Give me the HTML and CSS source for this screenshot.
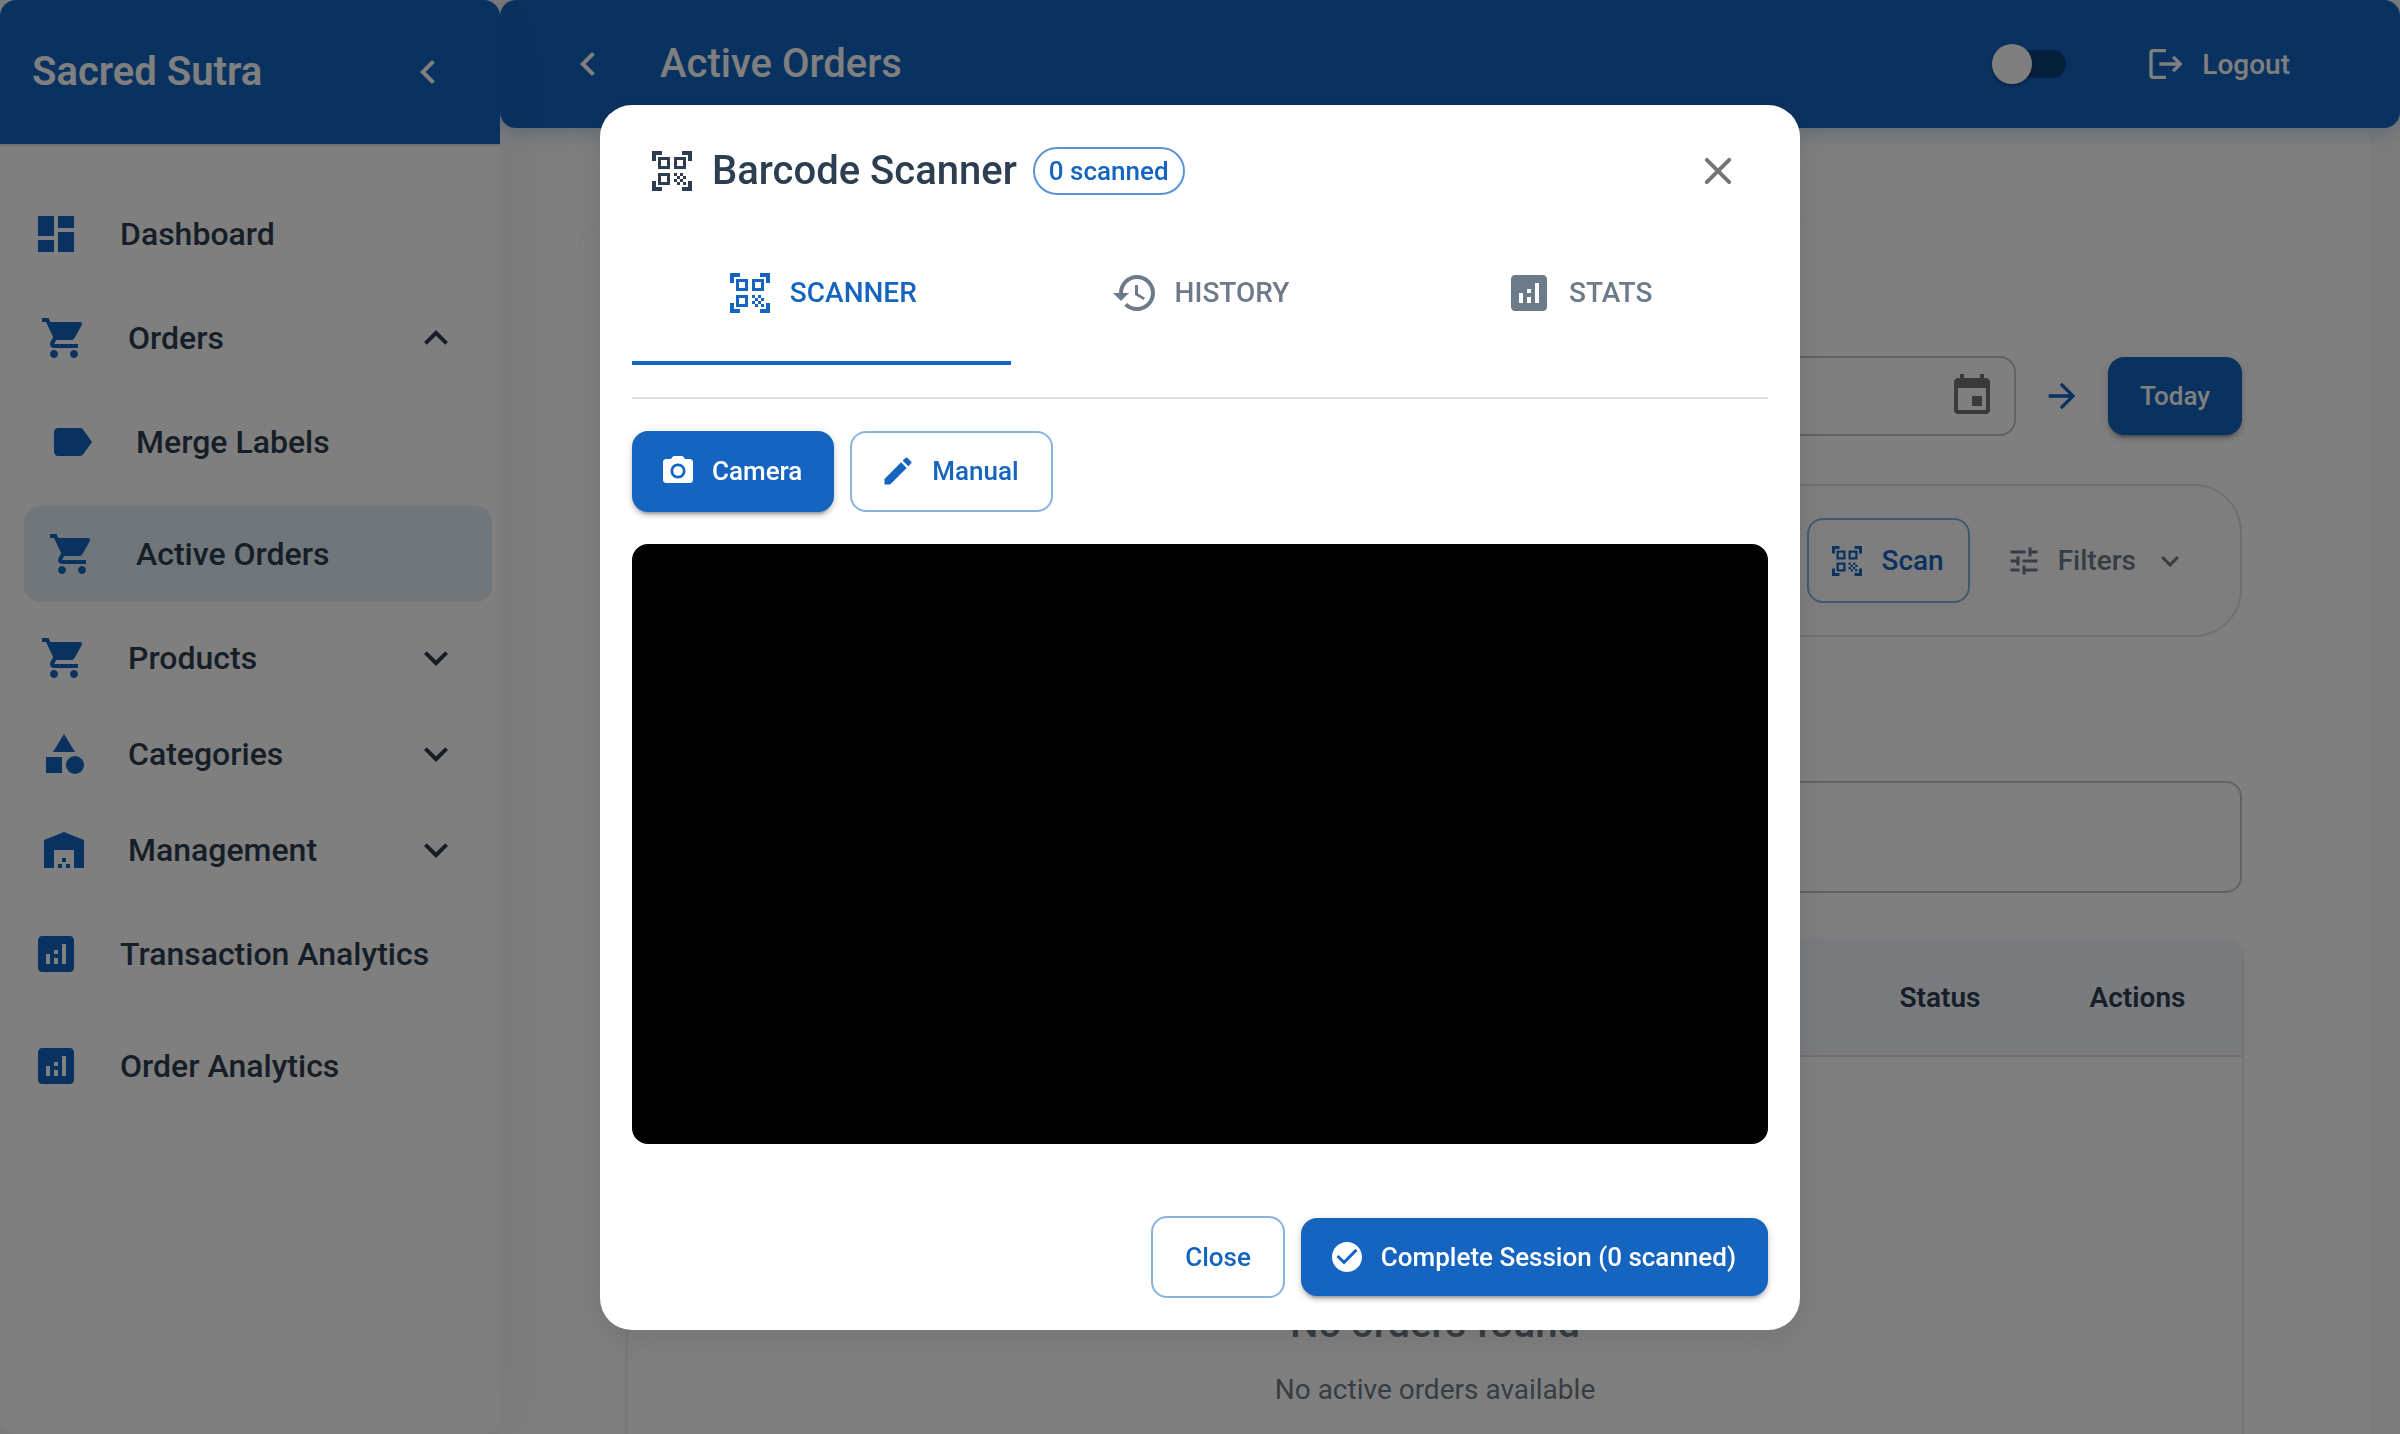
FILE: index.html
```html
<!DOCTYPE html>
<html lang="en">
<head>
<meta charset="utf-8">
<meta name="viewport" content="width=device-width, initial-scale=1">
<title>Sacred Sutra – Active Orders</title>
<link rel="stylesheet" href="styles.css">
</head>
<body>
<svg class="sprite" aria-hidden="true">
  <symbol id="i-dashboard" viewBox="0 0 24 24"><path d="M3 13h8V3H3v10zm0 8h8v-6H3v6zm10 0h8V11h-8v10zm0-18v6h8V3h-8z"/></symbol>
  <symbol id="i-cart" viewBox="0 0 24 24"><path d="M7 18c-1.100 0-1.990.9-1.990 2S5.900 22 7 22s2-.9 2-2-.9-2-2-2zM1 2v2h2l3.600 7.590-1.350 2.450c-.16.28-.25.61-.25.96 0 1.100.9 2 2 2h12v-2H7.420c-.14 0-.25-.11-.25-.25l.03-.12.9-1.630h7.450c.75 0 1.410-.41 1.750-1.030l3.580-6.490c.08-.14.12-.31.12-.48 0-.55-.45-1-1-1H5.210l-.94-2H1zm16 16c-1.100 0-1.990.9-1.990 2s.89 2 1.990 2 2-.9 2-2-.9-2-2-2z"/></symbol>
  <symbol id="i-label" viewBox="0 0 24 24"><path d="M17.630 5.840C17.270 5.330 16.670 5 16 5L5 5.010C3.900 5.010 3 5.900 3 7v10c0 1.100.9 1.990 2 1.990L16 19c.67 0 1.270-.33 1.630-.84L22 12l-4.370-6.160z"/></symbol>
  <symbol id="i-category" viewBox="0 0 24 24"><path d="m12 2-5.500 9h11z"/><circle cx="17.500" cy="17.500" r="4.500"/><path d="M3 13.500h8v8H3z"/></symbol>
  <symbol id="i-warehouse" viewBox="0 0 24 24"><path d="M22 21V7L12 3 2 7v14h5v-9h10v9h5zm-11-2H9v2h2v-2zm2-3h-2v2h2v-2zm2 3h-2v2h2v-2z"/></symbol>
  <symbol id="i-analytics" viewBox="0 0 24 24"><path d="M19 3H5c-1.100 0-2 .9-2 2v14c0 1.100.9 2 2 2h14c1.100 0 2-.9 2-2V5c0-1.100-.9-2-2-2zM9 17H7v-5h2v5zm4 0h-2v-3h2v3zm0-5h-2v-2h2v2zm4 5h-2V7h2v10z"/></symbol>
  <symbol id="i-left" viewBox="0 0 24 24"><path d="M15.410 7.410 14 6l-6 6 6 6 1.410-1.410L10.830 12z"/></symbol>
  <symbol id="i-down" viewBox="0 0 24 24"><path d="M16.590 8.590 12 13.170 7.410 8.590 6 10l6 6 6-6z"/></symbol>
  <symbol id="i-up" viewBox="0 0 24 24"><path d="m12 8-6 6 1.410 1.410L12 10.830l4.590 4.580L18 14z"/></symbol>
  <symbol id="i-logout" viewBox="0 0 24 24"><path d="m17 7-1.410 1.410L18.170 11H8v2h10.170l-2.580 2.580L17 17l5-5zM4 5h8V3H4c-1.100 0-2 .9-2 2v14c0 1.100.9 2 2 2h8v-2H4V5z"/></symbol>
  <symbol id="i-event" viewBox="0 0 24 24"><path d="M17 12h-5v5h5v-5zM16 1v2H8V1H6v2H5c-1.110 0-1.990.9-1.990 2L3 19c0 1.100.89 2 2 2h14c1.100 0 2-.9 2-2V5c0-1.100-.9-2-2-2h-1V1h-2zm3 18H5V8h14v11z"/></symbol>
  <symbol id="i-forward" viewBox="0 0 24 24"><path d="m12 4-1.410 1.410L16.170 11H4v2h12.170l-5.580 5.590L12 20l8-8z"/></symbol>
  <symbol id="i-qr" viewBox="0 0 24 24"><path d="M9.500 6.500v3h-3v-3h3M11 5H5v6h6V5zm-1.500 9.500v3h-3v-3h3M11 13H5v6h6v-6zm6.500-6.500v3h-3v-3h3M19 5h-6v6h6V5zm-6 8h1.500v1.500H13V13zm1.500 1.500H16V16h-1.500v-1.500zM16 13h1.500v1.500H16V13zm-3 3h1.500v1.500H13V16zm1.500 1.500H16V19h-1.500v-1.500zM16 16h1.500v1.500H16V16zm1.500-1.500H19V16h-1.500v-1.500zm0 3H19V19h-1.500v-1.500zM22 7h-2V4h-3V2h5v5zm0 15v-5h-2v3h-3v2h5zM2 22h5v-2H4v-3H2v5zM2 2v5h2V4h3V2H2z"/></symbol>
  <symbol id="i-tune" viewBox="0 0 24 24"><path d="M3 17v2h6v-2H3zM3 5v2h10V5H3zm10 16v-2h8v-2h-8v-2h-2v6h2zM7 9v2H3v2h4v2h2V9H7zm14 4v-2H11v2h10zm-6-4h2V7h4V5h-4V3h-2v6z"/></symbol>
  <symbol id="i-close" viewBox="0 0 24 24"><path d="M18.300 5.710a.996.996 0 0 0-1.410 0L12 10.590 7.110 5.700a.996.996 0 1 0-1.410 1.410L10.590 12 5.700 16.890a.996.996 0 1 0 1.410 1.410L12 13.410l4.890 4.890a.996.996 0 1 0 1.410-1.410L13.410 12l4.890-4.890c.38-.38.38-1.020 0-1.400z"/></symbol>
  <symbol id="i-history" viewBox="0 0 24 24"><path d="M13 3c-4.970 0-9 4.030-9 9H1l3.890 3.890.07.14L9 12H6c0-3.870 3.130-7 7-7s7 3.130 7 7-3.130 7-7 7c-1.930 0-3.680-.79-4.940-2.060l-1.420 1.420C8.270 19.990 10.510 21 13 21c4.970 0 9-4.030 9-9s-4.030-9-9-9zm-1 5v5l4.280 2.540.72-1.210-3.500-2.080V8H12z"/></symbol>
  <symbol id="i-camera" viewBox="0 0 24 24"><circle cx="12" cy="12" r="3.200"/><path d="M9 2 7.170 4H4c-1.100 0-2 .9-2 2v12c0 1.100.9 2 2 2h16c1.100 0 2-.9 2-2V6c0-1.100-.9-2-2-2h-3.170L15 2H9zm3 15c-2.760 0-5-2.240-5-5s2.240-5 5-5 5 2.240 5 5-2.240 5-5 5z"/></symbol>
  <symbol id="i-edit" viewBox="0 0 24 24"><path d="M3 17.250V21h3.750L17.810 9.940l-3.750-3.750L3 17.250zM20.710 7.040c.39-.39.39-1.020 0-1.410l-2.340-2.340a.996.996 0 0 0-1.410 0l-1.830 1.830 3.750 3.750 1.830-1.830z"/></symbol>
  <symbol id="i-check" viewBox="0 0 24 24"><path d="M12 2C6.480 2 2 6.480 2 12s4.480 10 10 10 10-4.480 10-10S17.520 2 12 2zm-2 15-5-5 1.410-1.410L10 14.170l7.590-7.590L19 8l-9 9z"/></symbol>
</svg>

<div class="app">
  <aside class="sidebar">
    <div class="brand">
      <span class="brand-name">Sacred Sutra</span>
      <button class="icon-button" type="button" aria-label="Collapse sidebar"><svg class="icon"><use href="#i-left"/></svg></button>
    </div>
    <nav class="nav">
      <a class="nav-item nav-page" href="#"><svg class="icon"><use href="#i-dashboard"/></svg>Dashboard</a>
      <button class="nav-item nav-group" type="button" aria-expanded="true"><svg class="icon"><use href="#i-cart"/></svg>Orders<svg class="icon nav-arrow"><use href="#i-up"/></svg></button>
      <a class="nav-item nav-sub" href="#"><svg class="icon"><use href="#i-label"/></svg>Merge Labels</a>
      <a class="nav-item nav-sub is-active" href="#" aria-current="page"><svg class="icon"><use href="#i-cart"/></svg>Active Orders</a>
      <button class="nav-item nav-group" type="button" aria-expanded="false"><svg class="icon"><use href="#i-cart"/></svg>Products<svg class="icon nav-arrow"><use href="#i-down"/></svg></button>
      <button class="nav-item nav-group" type="button" aria-expanded="false"><svg class="icon"><use href="#i-category"/></svg>Categories<svg class="icon nav-arrow"><use href="#i-down"/></svg></button>
      <button class="nav-item nav-group" type="button" aria-expanded="false"><svg class="icon"><use href="#i-warehouse"/></svg>Management<svg class="icon nav-arrow"><use href="#i-down"/></svg></button>
      <a class="nav-item nav-page" href="#"><svg class="icon"><use href="#i-analytics"/></svg>Transaction Analytics</a>
      <a class="nav-item nav-page" href="#"><svg class="icon"><use href="#i-analytics"/></svg>Order Analytics</a>
    </nav>
  </aside>

  <div class="page">
    <header class="topbar">
      <button class="icon-button" type="button" aria-label="Back"><svg class="icon"><use href="#i-left"/></svg></button>
      <h1 class="page-title">Active Orders</h1>
      <input class="switch" type="checkbox" aria-label="Dark mode">
      <button class="logout" type="button"><svg class="icon icon-md"><use href="#i-logout"/></svg>Logout</button>
    </header>
    <main class="content">
      <section class="card">
        <div class="date-row">
          <div class="date-field">
            <input class="date-input" type="text" aria-label="Date">
            <button class="icon-button" type="button" aria-label="Choose date"><svg class="icon"><use href="#i-event"/></svg></button>
          </div>
          <button class="icon-button next-day" type="button" aria-label="Next day"><svg class="icon icon-md"><use href="#i-forward"/></svg></button>
          <button class="btn btn-contained" type="button">Today</button>
        </div>
        <div class="toolbar">
          <button class="btn btn-outlined btn-scan" type="button"><svg class="icon icon-sm"><use href="#i-qr"/></svg>Scan</button>
          <button class="btn btn-filters" type="button"><svg class="icon icon-sm"><use href="#i-tune"/></svg>Filters<svg class="icon icon-sm"><use href="#i-down"/></svg></button>
        </div>
        <input class="search" type="text" aria-label="Search orders">
        <div class="table-wrap">
          <table class="orders">
            <thead>
              <tr><td></td><th class="col-status" scope="col">Status</th><th class="col-actions" scope="col">Actions</th></tr>
            </thead>
            <tbody>
              <tr><td class="empty" colspan="3">
                <p class="empty-title">No orders found</p>
                <p class="empty-text">No active orders available</p>
              </td></tr>
            </tbody>
          </table>
        </div>
      </section>
    </main>
  </div>
</div>

<div class="backdrop">
  <div class="dialog" role="dialog" aria-modal="true" aria-labelledby="dialog-title">
    <header class="dialog-head">
      <svg class="icon"><use href="#i-qr"/></svg>
      <h2 class="dialog-title" id="dialog-title">Barcode Scanner</h2>
      <span class="chip">0 scanned</span>
      <button class="icon-button dialog-close" type="button" aria-label="Close dialog"><svg class="icon"><use href="#i-close"/></svg></button>
    </header>
    <div class="dialog-body">
      <div class="tabs" role="tablist">
        <button class="tab is-selected" type="button" role="tab" aria-selected="true"><svg class="icon"><use href="#i-qr"/></svg>SCANNER</button>
        <button class="tab" type="button" role="tab" aria-selected="false"><svg class="icon"><use href="#i-history"/></svg>HISTORY</button>
        <button class="tab" type="button" role="tab" aria-selected="false"><svg class="icon"><use href="#i-analytics"/></svg>STATS</button>
      </div>
      <div class="scanner">
        <div class="modes">
          <button class="btn btn-contained btn-icon" type="button"><svg class="icon icon-sm"><use href="#i-camera"/></svg>Camera</button>
          <button class="btn btn-outlined btn-icon" type="button"><svg class="icon icon-sm"><use href="#i-edit"/></svg>Manual</button>
        </div>
        <video class="viewfinder"></video>
      </div>
    </div>
    <footer class="dialog-actions">
      <button class="btn btn-outlined" type="button">Close</button>
      <button class="btn btn-contained btn-icon" type="button"><svg class="icon icon-sm"><use href="#i-check"/></svg>Complete Session (0 scanned)</button>
    </footer>
  </div>
</div>
</body>
</html>
```
FILE: styles.css
```css
:root {
  --primary: #1565c0;
  --text: #2c3e50;
  --muted: #6c7a89;
  --line: #e0e0e0;
  --raised: 0 6px 2px -4px rgba(0, 0, 0, .2), 0 4px 4px rgba(0, 0, 0, .14), 0 2px 10px rgba(0, 0, 0, .12);
}

* { box-sizing: border-box; }

body {
  margin: 0;
  height: 100vh;
  overflow: hidden;
  background: #fafafa;
  color: var(--text);
  font-family: Roboto, "Liberation Sans", sans-serif;
  font-size: 28px;
}

button {
  margin: 0;
  padding: 0;
  border: 0;
  background: none;
  color: inherit;
  font: inherit;
  cursor: pointer;
}

h1, h2, p { margin: 0; }

.sprite { position: absolute; width: 0; height: 0; }

.icon {
  flex: none;
  display: block;
  width: 48px;
  height: 48px;
  fill: currentColor;
}
.icon-md { width: 40px; height: 40px; }
.icon-sm { width: 36px; height: 36px; }

.icon-button {
  flex: none;
  display: flex;
  align-items: center;
  justify-content: center;
  color: inherit;
}

/* App frame */
.app { display: flex; height: 100vh; overflow: hidden; }

.sidebar {
  position: relative;
  z-index: 1;
  flex: none;
  width: 500px;
  border-radius: 16px;
  overflow: hidden;
  background: #fff;
  box-shadow: 8px 0 80px rgba(0, 0, 0, .06);
}

.brand {
  display: flex;
  align-items: center;
  justify-content: space-between;
  height: 146px;
  padding: 0 48px 0 32px;
  border-bottom: 2px solid var(--line);
  background: var(--primary);
  color: #fff;
}
.brand-name { font-size: 40px; font-weight: 600; line-height: 64px; }

.nav {
  display: flex;
  flex-direction: column;
  padding-top: 32px;
}
.nav-item {
  display: flex;
  align-items: center;
  gap: 40px;
  height: 96px;
  color: var(--text);
  font-size: 32px;
  font-weight: 500;
  text-align: left;
  text-decoration: none;
}
.nav-item .icon { color: var(--primary); }
.nav-item .nav-arrow { margin-left: auto; color: var(--text); }
.nav-page { margin: 8px; padding: 0 24px; }
.nav-group { padding: 0 40px; }
.nav-sub { margin: 8px 8px 8px 24px; padding: 0 24px; border-radius: 16px; }
.is-active { background: #e3ecf4; }

.page {
  flex: 1;
  min-width: 0;
  display: flex;
  flex-direction: column;
}

.topbar {
  position: relative;
  flex: none;
  display: flex;
  align-items: center;
  height: 128px;
  padding: 0 110px 0 64px;
  border-radius: 16px;
  background: var(--primary);
  box-shadow: 0 4px 20px rgba(21, 101, 192, .3);
  color: #fff;
}
.page-title {
  flex: 1;
  padding-left: 48px;
  font-size: 40px;
  font-weight: 500;
  line-height: 64px;
}

.switch {
  appearance: none;
  display: flex;
  align-items: center;
  width: 68px;
  height: 28px;
  margin: 0 80px 0 0;
  border-radius: 14px;
  background: rgba(0, 0, 0, .38);
}
.switch::before {
  content: "";
  flex: none;
  width: 40px;
  height: 40px;
  margin-left: -6px;
  border-radius: 50%;
  background: #fff;
  box-shadow: 0 2px 4px rgba(0, 0, 0, .3);
}
.logout {
  display: flex;
  align-items: center;
  gap: 16px;
  font-weight: 500;
}

/* Orders page */
.content {
  flex: 1;
  padding: 96px 110px 0 80px;
  background: linear-gradient(to left, #f9f9f9 30px, #fefefe 30px);
}
.card {
  padding: 132px 48px 48px;
  border-radius: 32px;
  background: #fefefe;
  box-shadow: 0 0 8px rgba(0, 0, 0, .03);
}

.date-row {
  display: flex;
  align-items: center;
  gap: 26px;
  margin-bottom: 48px;
}
.date-field {
  flex: 1;
  display: flex;
  align-items: center;
  height: 80px;
  padding: 0 18px 0 28px;
  border: 2px solid #c4c4c4;
  border-radius: 16px;
  color: #757575;
}
.date-input {
  flex: 1;
  min-width: 0;
  border: 0;
  background: none;
  font: inherit;
}
.next-day { color: var(--primary); }

.btn {
  display: flex;
  align-items: center;
  gap: 16px;
  padding: 16px 32px;
  border-radius: 16px;
  font-size: 26px;
  font-weight: 500;
  line-height: 46px;
  white-space: nowrap;
}
.btn-icon { padding-left: 28px; }
.btn-contained {
  background: var(--primary);
  box-shadow: var(--raised);
  color: #fff;
}
.btn-outlined {
  border: 2px solid rgba(21, 101, 192, .5);
  color: var(--primary);
}

.toolbar {
  display: flex;
  align-items: center;
  justify-content: flex-end;
  height: 153px;
  padding: 0 30px 0 40px;
  border: 2px solid var(--line);
  border-radius: 48px;
  background: #fcfcfc;
}
.btn-scan, .btn-filters { font-size: 28px; line-height: 49px; }
.btn-scan { padding: 16px 24px 16px 20px; }
.btn-filters { padding: 18px 22px 18px 36px; color: var(--muted); }

.search {
  display: block;
  width: 100%;
  height: 112px;
  margin: 144px 0 46px;
  padding: 0 28px;
  border: 2px solid #c4c4c4;
  border-radius: 16px;
  background: none;
  font: inherit;
}

.table-wrap {
  min-height: 600px;
  border-radius: 16px;
  overflow: hidden;
  background: #fff;
  box-shadow: 0 4px 2px -2px rgba(0, 0, 0, .2), 0 2px 2px rgba(0, 0, 0, .14), 0 2px 6px rgba(0, 0, 0, .12);
}
.orders {
  width: 100%;
  border-collapse: collapse;
  table-layout: fixed;
}
.orders thead { background: #f5f6ff; }
.orders th {
  height: 117px;
  padding: 0;
  font-size: 28px;
  font-weight: 600;
  text-align: center;
}
.orders thead tr { border-bottom: 2px solid var(--line); }
.col-status { width: 186px; }
.col-actions { width: 209px; }
.empty {
  padding: 235px 0 64px;
  color: var(--muted);
  text-align: center;
}
.empty-title { margin-bottom: 14px; font-size: 40px; font-weight: 500; line-height: 64px; }
.empty-text { line-height: 40px; }

/* Scanner dialog */
.backdrop {
  position: fixed;
  inset: 0;
  z-index: 2;
  display: flex;
  align-items: center;
  justify-content: center;
  padding: 64px;
  background: rgba(0, 0, 0, .5);
}
.dialog {
  width: 100%;
  max-width: 1200px;
  border-radius: 32px;
  background: #fff;
  box-shadow: 0 8px 32px rgba(0, 0, 0, .1);
}
.dialog-head {
  display: flex;
  align-items: center;
  gap: 16px;
  padding: 32px 58px 16px 48px;
}
.dialog-title { font-size: 40px; font-weight: 500; line-height: 68px; }
.chip {
  padding: 0 14px;
  border: 2px solid rgba(21, 101, 192, .7);
  border-radius: 24px;
  color: var(--primary);
  font-size: 26px;
  font-weight: 500;
  line-height: 44px;
}
.dialog-close { margin-left: auto; color: #757575; }

.dialog-body { padding: 0 32px 40px; }
.tabs {
  display: flex;
  padding-bottom: 32px;
  border-bottom: 2px solid var(--line);
}
.tab {
  flex: 1;
  display: flex;
  align-items: center;
  justify-content: center;
  gap: 16px;
  height: 144px;
  border-top: 4px solid transparent;
  border-bottom: 4px solid transparent;
  color: var(--muted);
  font-size: 28px;
  font-weight: 500;
}
.is-selected { border-bottom-color: var(--primary); color: var(--primary); }

.scanner { padding-top: 32px; }
.modes { display: flex; gap: 16px; height: 81px; margin-bottom: 32px; }
.viewfinder {
  display: block;
  width: 100%;
  height: 600px;
  border-radius: 16px;
  background: #000;
}
.dialog-actions {
  display: flex;
  align-items: center;
  justify-content: flex-end;
  gap: 16px;
  padding: 32px;
}
```
